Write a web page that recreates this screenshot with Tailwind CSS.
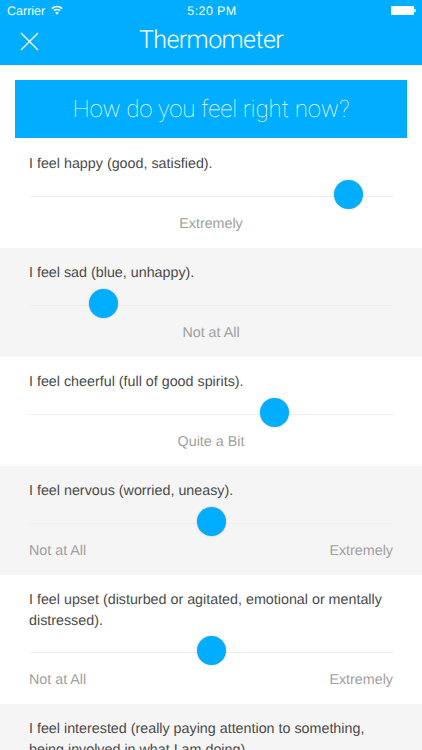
<!DOCTYPE html>
<html lang="en">
<head>
    <meta charset="UTF-8">
    <meta name="viewport" content="width=device-width, initial-scale=1.0">
    <title>Thermometer</title>
    <script src="https://cdn.jsdelivr.net/npm/@tailwindcss/browser@4"></script>
</head>
<body class="bg-white font-['Liberation_Sans',sans-serif] [text-rendering:geometricPrecision] h-[750px] overflow-hidden">

    <!-- Header -->
    <header class="bg-[#00adff] text-white h-[65px]">
        <div class="relative flex items-center justify-between h-[22px] pl-[7px] pr-[6px] text-[12.5px]">
            <div class="flex items-center gap-[6px]">
                <span>Carrier</span>
                <svg class="w-[12px] h-[10px] -mt-[2px]" viewBox="0 0 14 11" fill="none" stroke="white" stroke-width="1.9">
                    <path d="M1 3.8a8.6 8.6 0 0 1 12 0"/>
                    <path d="M3.4 6.4a5.2 5.2 0 0 1 7.2 0"/>
                    <path d="M7 11 4.9 8.6a3 3 0 0 1 4.2 0Z" fill="white" stroke="none"/>
                </svg>
            </div>
            <span class="absolute left-0 right-0 pl-[2px] text-center font-medium tracking-[0.4px] pointer-events-none">5:20 PM</span>
            <div class="flex items-center -mt-[1px]">
                <div class="w-[23px] h-[9px] bg-white rounded-[1px]"></div>
                <div class="w-[2px] h-[3px] bg-white/70"></div>
            </div>
        </div>
        <div class="relative flex items-center justify-center h-[38px]">
            <svg class="absolute left-[20px] top-[10px] w-[19px] h-[19px]" viewBox="0 0 19 19" stroke="white" stroke-width="1.4" fill="none">
                <path d="M1 1 18 18M18 1 1 18"/>
            </svg>
            <h1 class="font-['Roboto',sans-serif] font-light text-[25px] tracking-[-0.6px]">Thermometer</h1>
        </div>
    </header>

    <!-- Banner -->
    <div class="px-[15px] pt-[15px]">
        <div class="bg-[#00adff] h-[58px] flex items-center justify-center text-white font-['Roboto',sans-serif] font-thin text-[24px] tracking-[-0.1px]">How do you feel right now?</div>
    </div>

    <!-- Questions -->
    <div class="mt-[1px]">
        <div class="bg-white px-[29px] pt-[15px] pb-[14px]">
            <p class="text-[14.3px] leading-[20px] text-[#4a4a4a]">I feel happy (good, satisfied).</p>
            <div class="relative h-[29px] mt-[6px] flex items-center">
                <div class="w-full h-[1px] mt-[3px] bg-[#eeeeee]"></div>
                <div class="absolute w-[29px] h-[29px] -ml-[14.5px] rounded-full bg-[#00adff] shadow-[0_0_2px_rgba(0,0,0,0.25)]" style="left: 87.8%"></div>
            </div>
            <div class="mt-[5px] h-[20px] text-[14.3px] leading-[20px] text-[#a0a0a0] text-center">Extremely</div>
        </div>

        <div class="bg-[#f5f5f5] px-[29px] pt-[15px] pb-[14px]">
            <p class="text-[14.3px] leading-[20px] text-[#4a4a4a]">I feel sad (blue, unhappy).</p>
            <div class="relative h-[29px] mt-[6px] flex items-center">
                <div class="w-full h-[1px] mt-[3px] bg-[#eeeeee]"></div>
                <div class="absolute w-[29px] h-[29px] -ml-[14.5px] rounded-full bg-[#00adff] shadow-[0_0_2px_rgba(0,0,0,0.25)]" style="left: 20.5%"></div>
            </div>
            <div class="mt-[5px] h-[20px] text-[14.3px] leading-[20px] text-[#a0a0a0] text-center">Not at All</div>
        </div>

        <div class="bg-white px-[29px] pt-[15px] pb-[14px]">
            <p class="text-[14.3px] leading-[20px] text-[#4a4a4a]">I feel cheerful (full of good spirits).</p>
            <div class="relative h-[29px] mt-[6px] flex items-center">
                <div class="w-full h-[1px] mt-[3px] bg-[#eeeeee]"></div>
                <div class="absolute w-[29px] h-[29px] -ml-[14.5px] rounded-full bg-[#00adff] shadow-[0_0_2px_rgba(0,0,0,0.25)]" style="left: 67.4%"></div>
            </div>
            <div class="mt-[5px] h-[20px] text-[14.3px] leading-[20px] text-[#a0a0a0] text-center">Quite a Bit</div>
        </div>

        <div class="bg-[#f5f5f5] px-[29px] pt-[15px] pb-[14px]">
            <p class="text-[14.3px] leading-[20px] text-[#4a4a4a]">I feel nervous (worried, uneasy).</p>
            <div class="relative h-[29px] mt-[6px] flex items-center">
                <div class="w-full h-[1px] mt-[3px] bg-[#eeeeee]"></div>
                <div class="absolute w-[29px] h-[29px] -ml-[14.5px] rounded-full bg-[#00adff] shadow-[0_0_2px_rgba(0,0,0,0.25)]" style="left: 50%"></div>
            </div>
            <div class="mt-[5px] h-[20px] flex justify-between text-[14.3px] leading-[20px] text-[#a0a0a0]">
                <span>Not at All</span>
                <span>Extremely</span>
            </div>
        </div>

        <div class="bg-white px-[29px] pt-[15px] pb-[14px]">
            <p class="text-[14.3px] leading-[20.5px] text-[#4a4a4a]">I feel upset (disturbed or agitated, emotional or mentally distressed).</p>
            <div class="relative h-[29px] mt-[5px] flex items-center">
                <div class="w-full h-[1px] mt-[3px] bg-[#eeeeee]"></div>
                <div class="absolute w-[29px] h-[29px] -ml-[14.5px] rounded-full bg-[#00adff] shadow-[0_0_2px_rgba(0,0,0,0.25)]" style="left: 50%"></div>
            </div>
            <div class="mt-[5px] h-[20px] flex justify-between text-[14.3px] leading-[20px] text-[#a0a0a0]">
                <span>Not at All</span>
                <span>Extremely</span>
            </div>
        </div>

        <div class="bg-[#f5f5f5] px-[29px] pt-[15px] pb-[14px]">
            <p class="text-[14.3px] leading-[20.5px] text-[#4a4a4a]">I feel interested (really paying attention to something, being involved in what I am doing).</p>
        </div>
    </div>
</body>
</html>
